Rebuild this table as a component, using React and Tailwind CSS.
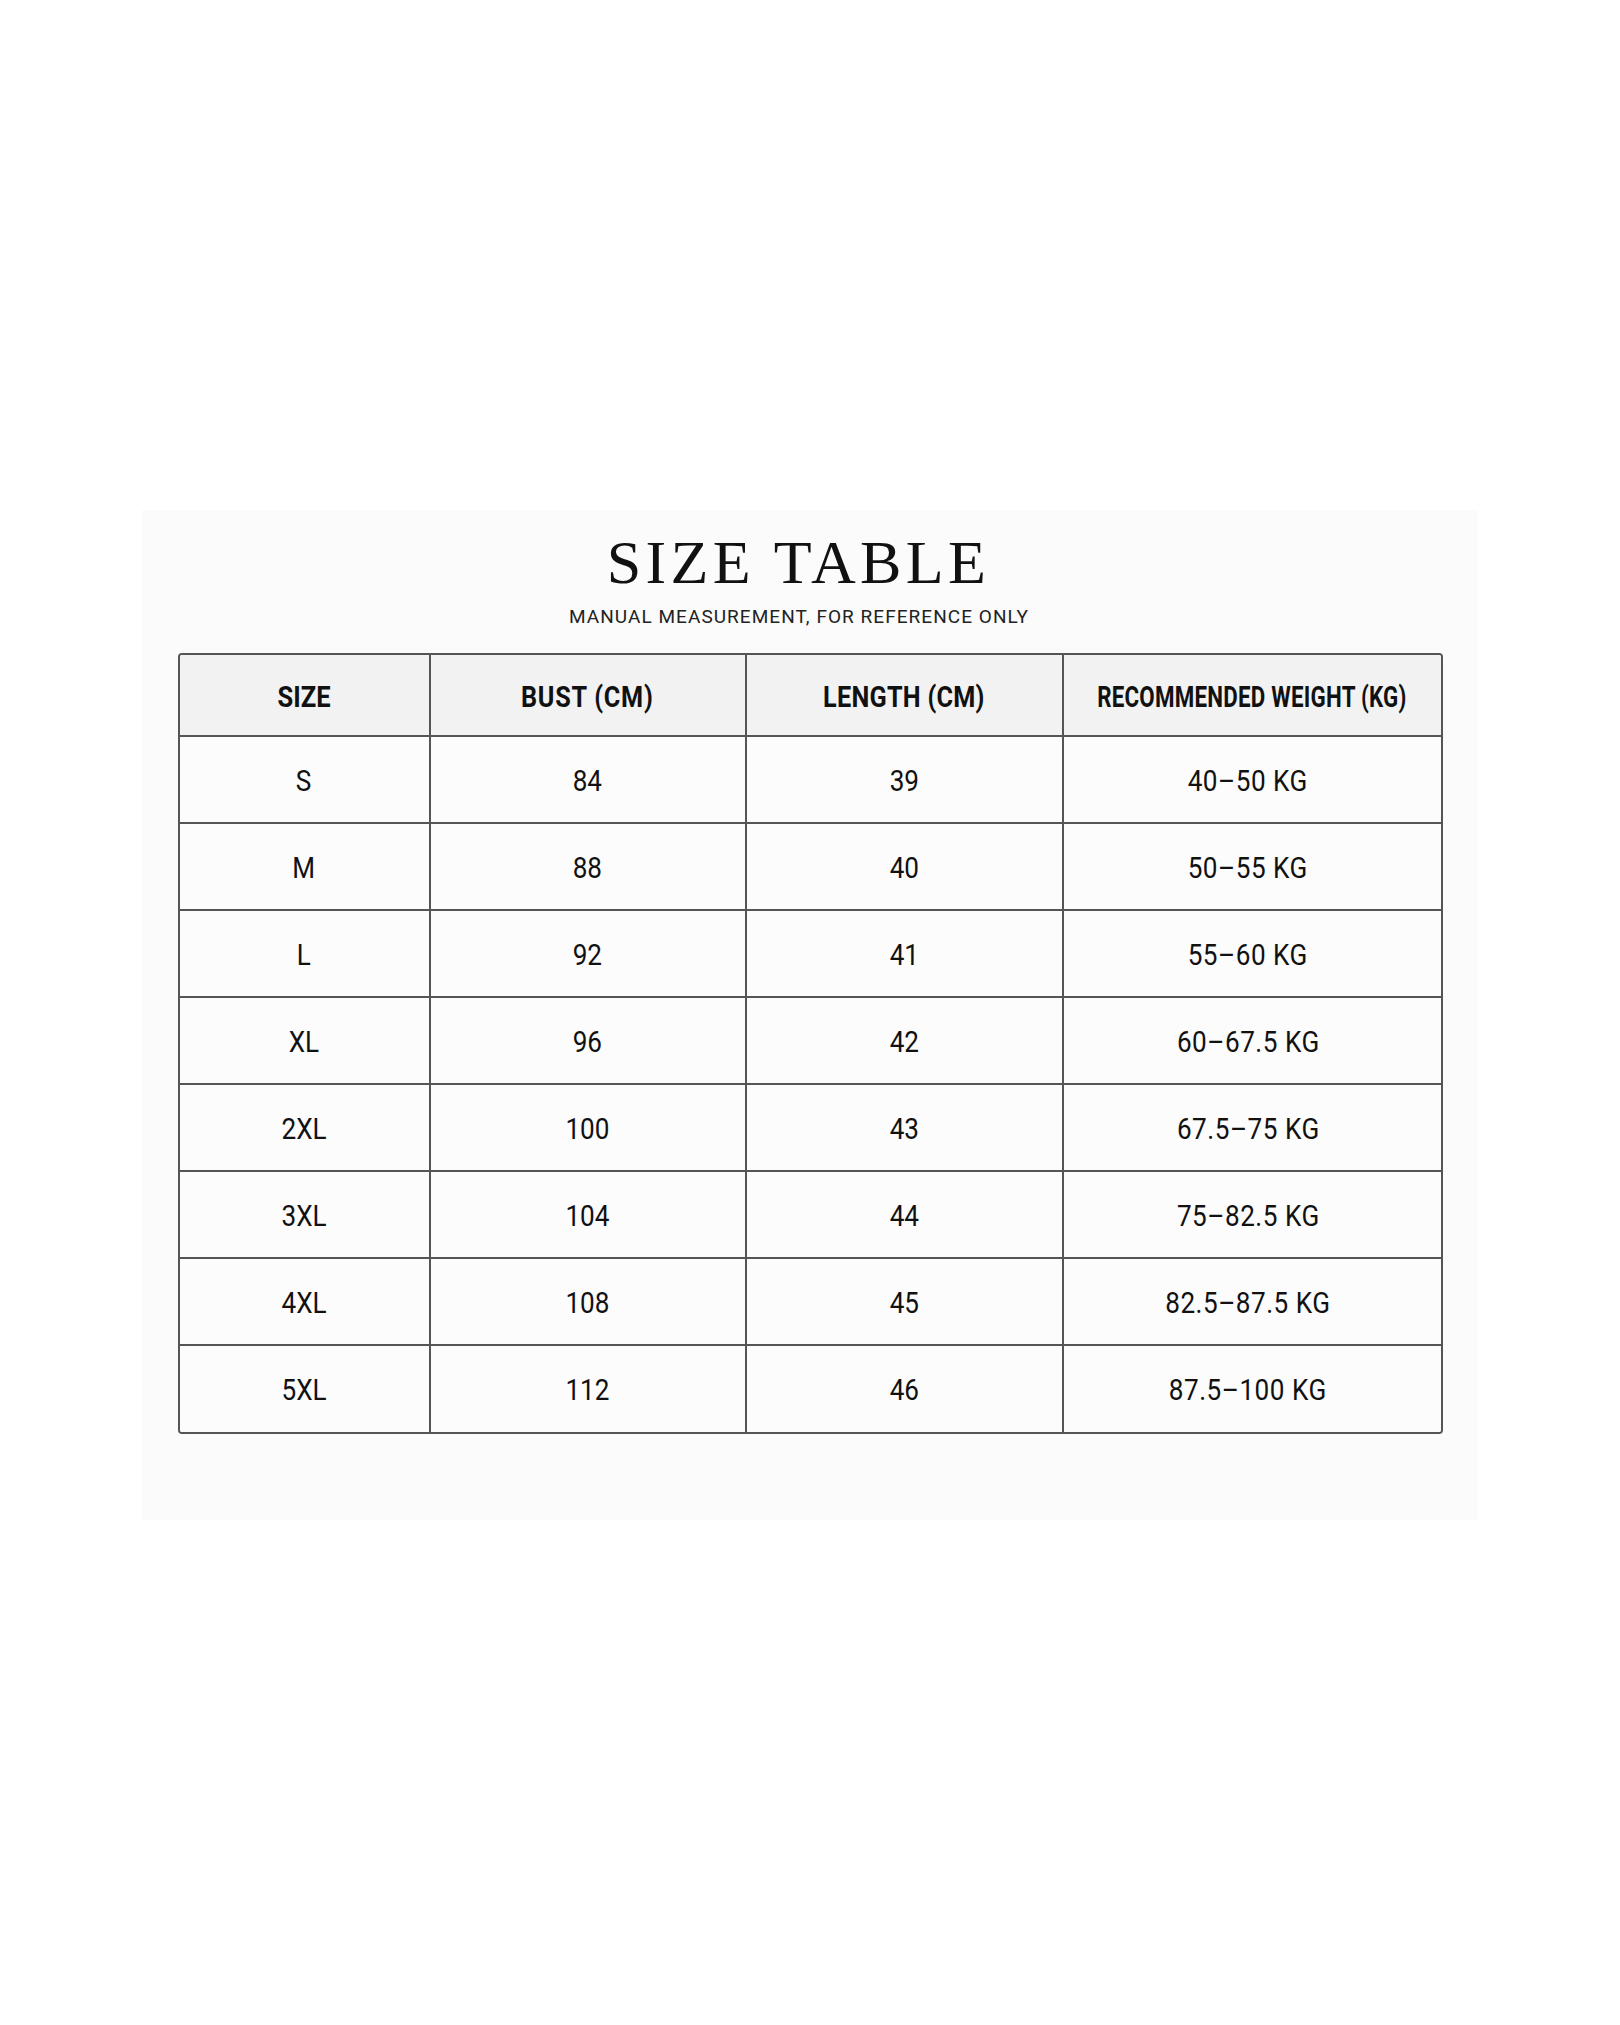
export default function App() {
  const rows = [
    ["S", "84", "39", "40–50 KG"],
    ["M", "88", "40", "50–55 KG"],
    ["L", "92", "41", "55–60 KG"],
    ["XL", "96", "42", "60–67.5 KG"],
    ["2XL", "100", "43", "67.5–75 KG"],
    ["3XL", "104", "44", "75–82.5 KG"],
    ["4XL", "108", "45", "82.5–87.5 KG"],
    ["5XL", "112", "46", "87.5–100 KG"],
  ];
  const roboto = { fontFamily: 'Roboto, "Liberation Sans", Arial, sans-serif' };
  return (
    <div className="w-[1620px] h-[2025px] bg-white pt-[510px] flex flex-col items-center">
      <div className="w-[1336px] h-[1010px] bg-[#fbfbfb] pt-[21px] px-[35px] flex flex-col items-center">
        <h1
          className="text-[62px] leading-none tracking-[0.07em] text-[#111] font-normal mr-[23px]"
          style={{ fontFamily: '"Liberation Serif", serif' }}
        >
          SIZE TABLE
        </h1>
        <p
          className="mt-[14px] text-[19px] leading-none text-[#222] tracking-[0.055em] mr-[22px]"
          style={roboto}
        >
          MANUAL MEASUREMENT, FOR REFERENCE ONLY
        </p>
        <div
          className="mt-[27px] w-[1265px] border-2 border-[#555] rounded-[4px] overflow-hidden text-[#111]"
          style={roboto}
        >
          <div className="grid grid-cols-[251px_316px_317px_377px] h-[82px] bg-[#f2f2f2] border-b-2 border-[#555] font-bold text-[29px]">
            <div className="flex items-center justify-center pt-[6px] border-r-2 border-[#555]">
              <span className="inline-block scale-x-[0.88] whitespace-nowrap">SIZE</span>
            </div>
            <div className="flex items-center justify-center pt-[6px] border-r-2 border-[#555]">
              <span className="inline-block scale-x-[0.87] whitespace-nowrap tracking-[0.03em]">BUST (CM)</span>
            </div>
            <div className="flex items-center justify-center pt-[6px] border-r-2 border-[#555]">
              <span className="inline-block scale-x-[0.87] whitespace-nowrap tracking-[0.01em]">LENGTH (CM)</span>
            </div>
            <div className="flex items-center justify-center pt-[6px]">
              <span className="inline-block scale-x-[0.77] whitespace-nowrap tracking-[0.01em]">RECOMMENDED WEIGHT (KG)</span>
            </div>
          </div>
          {rows.map((r, i) => (
            <div
              key={r[0]}
              className={
                i < rows.length - 1
                  ? "grid grid-cols-[251px_316px_317px_377px] h-[87px] bg-[#fcfcfc] border-b-2 border-[#555] text-[29px]"
                  : "grid grid-cols-[251px_316px_317px_377px] h-[86px] bg-[#fcfcfc] text-[29px]"
              }
            >
              <div className="flex items-center justify-center pt-[4px] border-r-2 border-[#555]">
                <span className="inline-block scale-x-[0.9] whitespace-nowrap">{r[0]}</span>
              </div>
              <div className="flex items-center justify-center pt-[4px] border-r-2 border-[#555]">
                <span className="inline-block scale-x-[0.9] whitespace-nowrap">{r[1]}</span>
              </div>
              <div className="flex items-center justify-center pt-[4px] border-r-2 border-[#555]">
                <span className="inline-block scale-x-[0.9] whitespace-nowrap">{r[2]}</span>
              </div>
              <div className="flex items-center justify-center pt-[4px] pr-[8px]">
                <span className="inline-block scale-x-[0.9] whitespace-nowrap tracking-[0.02em]">{r[3]}</span>
              </div>
            </div>
          ))}
        </div>
      </div>
    </div>
  );
}
